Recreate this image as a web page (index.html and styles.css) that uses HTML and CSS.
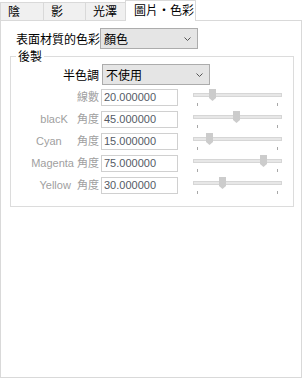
FILE: index.html
```html
<!DOCTYPE html>
<html>
<head>
<meta charset="utf-8">
<link rel="stylesheet" href="styles.css">
</head>
<body>
<div class="window">
  <div class="tabs">
    <div class="tab t1">陰</div>
    <div class="tab t2">影</div>
    <div class="tab t3">光澤</div>
    <div class="tab active">圖片·色彩</div>
  </div>
  <div class="panel">
    <div class="row-top">
      <span class="lbl-top">表面材質的色彩</span>
      <div class="select sel-color"><span>顏色</span><svg class="chev" width="7" height="4" viewBox="0 0 7 4"><polyline points="0.5,0.5 3.5,3.5 6.5,0.5" fill="none" stroke="#555" stroke-width="1"/></svg></div>
    </div>
    <fieldset class="group">
      <legend>後製</legend>
      <div class="ht-row">
        <span class="lbl">半色調</span>
        <div class="select sel-ht"><span>不使用</span><svg class="chev" width="7" height="4" viewBox="0 0 7 4"><polyline points="0.5,0.5 3.5,3.5 6.5,0.5" fill="none" stroke="#555" stroke-width="1"/></svg></div>
      </div>
      <div class="rows">
        <div class="row">
          <span class="lbl dis">線數</span>
          <div class="input">20.000000</div>
          <div class="slider"><div class="track"></div><svg class="thumb" style="left:16px" width="7" height="12" viewBox="0 0 7 12"><polygon points="0,0 7,0 7,9 3.5,12 0,9" fill="#cccccc"/></svg><i class="tick tl"></i><i class="tick tr"></i></div>
        </div>
        <div class="row">
          <span class="lbl dis">blacK   角度</span>
          <div class="input">45.000000</div>
          <div class="slider"><div class="track"></div><svg class="thumb" style="left:40px" width="7" height="12" viewBox="0 0 7 12"><polygon points="0,0 7,0 7,9 3.5,12 0,9" fill="#cccccc"/></svg><i class="tick tl"></i><i class="tick tr"></i></div>
        </div>
        <div class="row">
          <span class="lbl dis">Cyan     角度</span>
          <div class="input">15.000000</div>
          <div class="slider"><div class="track"></div><svg class="thumb" style="left:13px" width="7" height="12" viewBox="0 0 7 12"><polygon points="0,0 7,0 7,9 3.5,12 0,9" fill="#cccccc"/></svg><i class="tick tl"></i><i class="tick tr"></i></div>
        </div>
        <div class="row">
          <span class="lbl dis">Magenta 角度</span>
          <div class="input">75.000000</div>
          <div class="slider"><div class="track"></div><svg class="thumb" style="left:67px" width="7" height="12" viewBox="0 0 7 12"><polygon points="0,0 7,0 7,9 3.5,12 0,9" fill="#cccccc"/></svg><i class="tick tl"></i><i class="tick tr"></i></div>
        </div>
        <div class="row">
          <span class="lbl dis">Yellow  角度</span>
          <div class="input">30.000000</div>
          <div class="slider"><div class="track"></div><svg class="thumb" style="left:26px" width="7" height="12" viewBox="0 0 7 12"><polygon points="0,0 7,0 7,9 3.5,12 0,9" fill="#cccccc"/></svg><i class="tick tl"></i><i class="tick tr"></i></div>
        </div>
      </div>
    </fieldset>
  </div>
</div>
</body>
</html>
```
FILE: styles.css
```css
* { box-sizing: border-box; }
html, body { margin: 0; padding: 0; background: #ffffff; }
body {
  font-family: "Noto Sans CJK TC", "Liberation Sans", sans-serif;
  font-size: 12px;
  color: #000;
}
.window { width: 305px; height: 380px; }
.tabs {
  display: flex;
  align-items: flex-end;
  height: 20px;
}
.tab {
  height: 18px;
  border: 1px solid #d9d9d9;
  border-bottom: none;
  background: #f0f0f0;
  margin-right: -1px;
  padding-left: 7px;
  line-height: 16px;
  white-space: nowrap;
}
.t1 { width: 44px; }
.t2 { width: 43px; }
.t3 { width: 43px; }
.tab.active {
  position: relative;
  z-index: 1;
  height: 21px;
  margin-bottom: -1px;
  margin-left: -2px;
  width: 71px;
  background: #ffffff;
  padding-left: 8px;
  line-height: 18px;
}
.panel {
  width: 302px;
  height: 358px;
  border: 1px solid #d9d9d9;
  background: #ffffff;
}
.row-top {
  display: flex;
  align-items: center;
  margin: 7px 0 0 15px;
  height: 21px;
}
.lbl-top { width: 84px; white-space: nowrap; }
.select {
  display: flex;
  align-items: center;
  justify-content: space-between;
  height: 21px;
  background: #e5e5e5;
  border: 1px solid #acacac;
  padding: 0 6px 0 3px;
}
.sel-color { width: 98px; }
.sel-ht { width: 108px; margin-left: 3px; }
.chev { display: block; }
.group {
  margin: 0 0 0 9px;
  width: 284px;
  border: 1px solid #dcdcdc;
  padding: 1px 0 7px 0;
}
.group legend {
  margin-left: 5px;
  padding: 0 2px;
  line-height: 14px;
  font-size: 12px;
}
.ht-row {
  display: flex;
  align-items: center;
  height: 21px;
}
.lbl {
  width: 88px;
  text-align: right;
  white-space: pre;
  font-family: "Liberation Sans", "Noto Sans CJK TC", sans-serif;
  font-size: 11px;
}
.ht-row .lbl { font-family: "Noto Sans CJK TC", sans-serif; font-size: 12px; }
.dis { color: #a0a0a0; }
.rows {
  display: flex;
  flex-direction: column;
  gap: 5px;
  padding-top: 4px;
  padding-bottom: 5px;
}
.row {
  display: flex;
  align-items: flex-start;
  height: 17px;
}
.row .lbl { line-height: 17px; }
.input {
  margin-left: 2px;
  width: 77px;
  height: 17px;
  border: 1px solid #d0d0d0;
  background: #fff;
  padding-left: 2px;
  font-family: "Liberation Sans", sans-serif;
  font-size: 11px;
  line-height: 15px;
  color: #555b66;
}
.slider {
  position: relative;
  margin-left: 15px;
  width: 89px;
  height: 17px;
}
.track {
  position: absolute;
  left: 0;
  right: 0;
  top: 4px;
  height: 4px;
  background: #e7e7e7;
  border: 1px solid #d6d6d6;
}
.thumb { position: absolute; top: 0; }
.tick {
  position: absolute;
  top: 14px;
  width: 1px;
  height: 3px;
  background: #a8a8a8;
}
.tl { left: 4px; }
.tr { left: 84px; }
```
